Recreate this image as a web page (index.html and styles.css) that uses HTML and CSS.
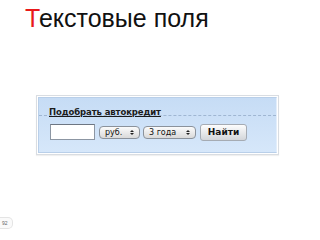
FILE: index.html
```html
<!DOCTYPE html>
<html>
<head>
<meta charset="utf-8">
<link rel="stylesheet" href="styles.css">
</head>
<body>
<div class="slide">
  <h1 class="title"><span class="first">Т</span>екстовые поля</h1>
  <div class="widget">
    <div class="panel">
      <div class="head"><a class="link">Подобрать автокредит</a></div>
      <div class="row">
        <span class="input"></span>
        <span class="select sel1">руб.<i class="arr"><b class="up"></b><b class="dn"></b></i></span>
        <span class="select sel2">3 года<i class="arr"><b class="up"></b><b class="dn"></b></i></span>
        <span class="btn">Найти</span>
      </div>
    </div>
  </div>
  <div class="pagenum">92</div>
</div>
</body>
</html>
```
FILE: styles.css
```css
html, body {
  margin: 0;
  padding: 0;
  background: #fff;
}
.slide {
  position: relative;
  width: 320px;
  height: 240px;
  overflow: hidden;
  font-family: "Liberation Sans", Arial, sans-serif;
}
.title {
  margin: 0;
  padding: 3px 0 0 25px;
  font-size: 25px;
  font-weight: normal;
  line-height: 30px;
  color: #111;
}
.first {
  color: #e8191b;
}
.widget {
  margin: 62px 0 0 36px;
  width: 243px;
  height: 60px;
  box-sizing: border-box;
  border: 1px solid #d9dde2;
  padding: 1px;
  background: #fff;
  box-shadow: 0 1px 1px rgba(0,0,0,0.06);
}
.panel {
  height: 100%;
  box-sizing: border-box;
  background: linear-gradient(#c6dcf5, #d6e7fa);
  border: 1px solid #b9cfe9;
  border-right-color: #e3eefb;
}
.head {
  height: 18px;
  border-bottom: 1px dashed #9fb6d2;
  padding: 3px 0 0 10px;
  box-sizing: border-box;
}
.link {
  font-family: "DejaVu Sans", sans-serif;
  font-size: 8.5px;
  font-weight: bold;
  color: #1b1b1b;
  text-decoration: underline;
  letter-spacing: -0.1px;
}
.row {
  display: flex;
  align-items: center;
  padding: 7px 0 0 11px;
  height: 18px;
}
.input {
  width: 45px;
  height: 16px;
  box-sizing: border-box;
  background: #fff;
  border: 1px solid #8c96a3;
  border-top-color: #6d7682;
}
.select {
  height: 13px;
  box-sizing: border-box;
  display: flex;
  align-items: center;
  justify-content: space-between;
  border: 1px solid #8b929b;
  border-radius: 4px;
  background: linear-gradient(#fbfbfb, #d9d9d9);
  font-family: "DejaVu Sans", sans-serif;
  font-size: 8px;
  color: #111;
  padding: 0 5px 0 5px;
}
.sel1 { width: 41px; margin-left: 4px; }
.sel2 { width: 53px; margin-left: 3px; }
.arr {
  display: flex;
  flex-direction: column;
  gap: 1px;
}
.up, .dn {
  width: 0;
  height: 0;
  border-left: 2px solid transparent;
  border-right: 2px solid transparent;
}
.up { border-bottom: 2px solid #222; }
.dn { border-top: 2px solid #222; }
.btn {
  margin-left: 4px;
  width: 47px;
  height: 17px;
  box-sizing: border-box;
  border: 1px solid #a5abb3;
  border-radius: 3px;
  background: linear-gradient(#fdfdfd, #d3d6da);
  font-family: "DejaVu Sans", sans-serif;
  font-size: 9px;
  font-weight: bold;
  color: #111;
  display: flex;
  align-items: center;
  justify-content: center;
}
.pagenum {
  position: absolute;
  left: 0;
  top: 217px;
  width: 10px;
  height: 10px;
  font-size: 5px;
  line-height: 10px;
  color: #666;
  padding-left: 2px;
  border: 1px solid #e4e4e4;
  border-left: none;
  border-radius: 0 5px 5px 0;
  background: #fafafa;
}
```
